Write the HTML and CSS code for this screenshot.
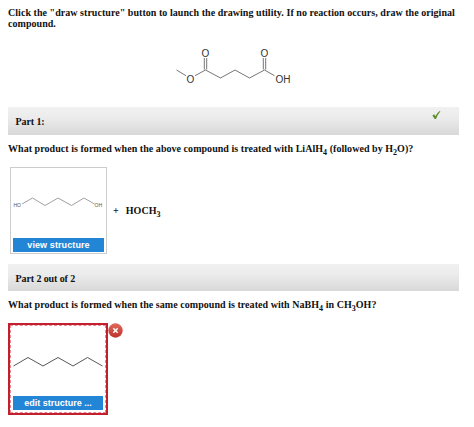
FILE: index.html
```
<!DOCTYPE html>
<html>
<head>
	<meta charset="utf-8">
	<title>Draw structure</title>
	<link rel="stylesheet" href="styles.css">
</head>
<body>
<p class="intro">Click the "draw structure" button to launch the drawing utility. If no reaction occurs, draw the original compound.</p>
<div class="molecule">
	<svg class="ester" width="130" height="46" viewBox="170 44 130 46">
		<path d="M176.5 70L186 75.7M195 75.7L205.5 70L220.5 78L235 70L249.5 78L264.5 70L274.5 75.7M204.3 69.5V58M206.7 69.5V58M263.3 69.5V58M265.7 69.5V58"/>
		<text x="205.5" y="57">O</text>
		<text x="190.5" y="82.5">O</text>
		<text x="264.5" y="57">O</text>
		<text x="283" y="82.5">OH</text>
	</svg>
</div>
<header class="part">
	<h2>Part 1:</h2>
	<svg class="check" width="9" height="10" viewBox="0 0 9 10">
		<path d="M.4 5.5L2.2 4.3L3.3 6.2Q5 2.8 8 .7L8.3 1.6Q5.5 4.8 4 9H2.7Z"/>
	</svg>
</header>
<p class="question">What product is formed when the above compound is treated with LiAlH<sub>4</sub> (followed by H<sub>2</sub>O)?</p>
<div class="answer">
	<div class="structure">
		<svg class="diol" width="94" height="70" viewBox="11 168 94 70">
			<path d="M22 204L32.5 198L45 205.5L58 198L71.5 205.5L84 198L94.5 204"/>
			<text x="17.2" y="207">HO</text>
			<text x="98.3" y="207">OH</text>
		</svg>
		<button class="view">view structure</button>
	</div>
	<span class="plus">+</span>
	<span class="product">HOCH<sub>3</sub></span>
</div>
<header class="part second">
	<h2>Part 2 out of 2</h2>
</header>
<p class="question">What product is formed when the same compound is treated with NaBH<sub>4</sub> in CH<sub>3</sub>OH?</p>
<div class="answer">
	<div class="structure wrong">
		<svg class="heptane" width="96" height="71" viewBox="10 325 96 71">
			<path d="M13.5 366L28 357.5L43 366L58 357.5L73 366L87.5 357.5L102.5 366"/>
		</svg>
		<button class="edit">edit structure ...</button>
	</div>
	<svg class="cross" width="16" height="16" viewBox="0 0 16 16">
		<defs>
			<linearGradient id="red" x2="0" y2="1">
				<stop offset="0" stop-color="#e0695c"/>
				<stop offset="1" stop-color="#bd3229"/>
			</linearGradient>
		</defs>
		<circle cx="7.5" cy="7.5" r="7.2"/>
		<path d="M5.3 5.3L9.7 9.7M9.7 5.3L5.3 9.7"/>
	</svg>
</div>
</body>
</html>
```
FILE: styles.css
```
* {
	margin: 0;
	padding: 0;
	box-sizing: border-box;
}
body {
	width: 474px;
	padding: 7px 15px 0 8px;
	background: #fff;
	color: #111;
	font: bold 10px/11px "Liberation Serif", "Times New Roman", serif;
	letter-spacing: .043px;
}
svg {
	display: block;
	fill: none;
}
sub {
	font-size: 8px;
	line-height: 0;
	vertical-align: -3px;
}
.intro {
	height: 23px;
}
.molecule {
	height: 77px;
	padding: 14px 0 0 162px;
}
.ester path {
	stroke: #666;
	stroke-width: .9;
}
.ester text {
	fill: #333;
	font: 10px "Liberation Sans", Arial, sans-serif;
	text-anchor: middle;
}
.part {
	display: flex;
	align-items: center;
	justify-content: space-between;
	height: 28px;
	padding: 1px 18px 0 7.5px;
	background: linear-gradient(#f1f1f1, #ebebeb 40%, #d8d8d8);
}
.part.second {
	height: 27px;
	margin-top: 10px;
}
.part h2 {
	font-size: 10px;
	letter-spacing: -.1px;
}
.check {
	align-self: flex-start;
	margin-top: 2px;
	fill: #5d8f27;
}
.question {
	height: 32px;
	padding-top: 8px;
	white-space: nowrap;
}
.answer {
	display: flex;
}
.structure {
	flex: none;
	width: 97px;
	height: 87px;
	margin-left: 2px;
	border: 1px solid #ccc;
}
.structure button {
	display: block;
	width: 91px;
	height: 14px;
	margin-left: 2px;
	border: 0;
	background: #2385d6;
	color: #fff;
	font: bold 9px/13px "Liberation Sans", Arial, sans-serif;
}
.structure .view {
	letter-spacing: .1px;
}
.diol path {
	stroke: #888;
	stroke-width: .8;
}
.diol text {
	fill: #555;
	font: 5px "Liberation Sans", Arial, sans-serif;
	text-anchor: middle;
}
.plus {
	margin: 38px 0 0 6px;
}
.product {
	margin: 38px 0 0 7px;
}
.structure.wrong {
	width: 100px;
	height: 92px;
	margin-left: 0;
	border: 2px solid #c2202f;
	outline: 1px dashed #e58a92;
	outline-offset: -3px;
}
.structure.wrong button {
	width: 90px;
	margin-left: 3px;
}
.heptane path {
	stroke: #444;
	stroke-width: .9;
}
.cross circle {
	fill: url(#red);
}
.cross path {
	stroke: #fff;
	stroke-width: 1.5;
}
```
